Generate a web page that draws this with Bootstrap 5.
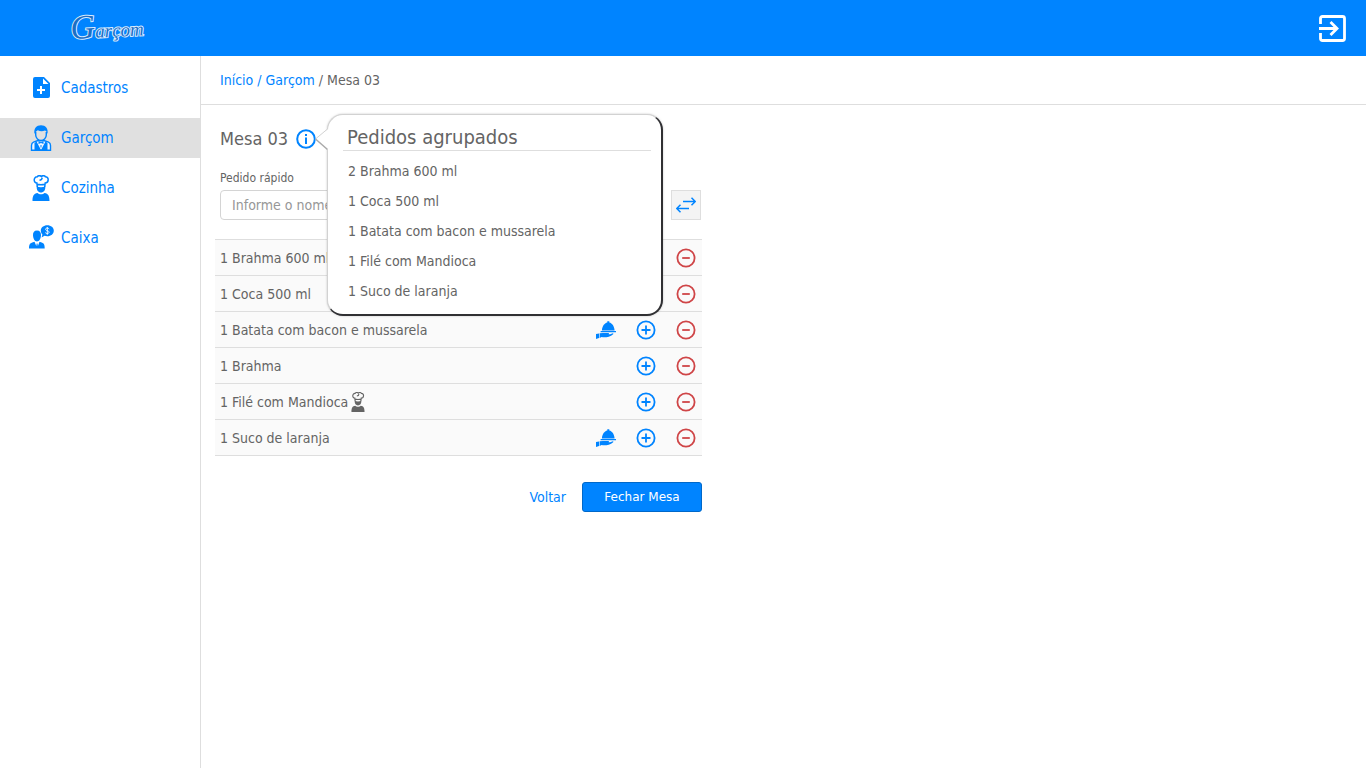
<!DOCTYPE html>
<html lang="pt-BR">
<head>
<meta charset="utf-8">
<meta name="viewport" content="width=device-width, initial-scale=1">
<title>Garçom - Mesa 03</title>
<link href="https://cdn.jsdelivr.net/npm/bootstrap@5.3.0/dist/css/bootstrap.min.css" rel="stylesheet">
<style>
  :root { --brand: #0084ff; --ink: #646464; --rule: #dedede; --danger: #cf4547; }
  body { font-family: Tahoma, "DejaVu Sans Condensed", "DejaVu Sans", sans-serif; font-size: 14px; line-height: 20px; color: var(--ink); background: #fff; }
  a { color: var(--brand); text-decoration: none; }
  svg { display: block; flex: none; }
  .topbar { height: 56px; background: var(--brand); padding: 0 20px 0 66px; }
  .brand-name { font-family: "Liberation Serif", serif; font-style: italic; font-weight: 400; fill: #1c6fc4; stroke: #d8ebff; stroke-width: 2; paint-order: stroke; }
  .sidebar { width: 201px; border-right: 1px solid var(--rule); padding-top: 12px; gap: 10px; }
  .sidebar .nav-link { height: 40px; padding: 0 0 0 28px; gap: 7px; font-size: 15px; color: var(--brand); border-radius: 0; }
  .sidebar .nav-link.active { background: #e0e0e0; }
  .sidebar .nav-link svg { width: 26px; height: 26px; }
  .crumbs { height: 49px; padding: 0 19px; border-bottom: 1px solid var(--rule); }
  .order { max-width: 487px; margin-left: 14px; padding-top: 22px; }
  .inset { padding-left: 5px; }
  .order h1 { font-size: 18px; line-height: 24px; }
  .bare { background: none; border: 0; padding: 0; color: var(--brand); }
  .minus { color: var(--danger); }
  .quick { padding: 15px 1px 19px 0; }
  .quick label { font-size: 12px; line-height: 16px; }
  .quick .form-control { height: 30px; font-size: 14px; padding: 0 11px; border-color: #d4d4d4; border-radius: 4px; }
  .quick .form-control::placeholder { color: #979797; }
  .swap { width: 30px; height: 30px; background: #f4f4f4; border: 1px solid var(--rule); padding: 0; color: var(--brand); }
  .items { border-top: 1px solid var(--rule); --bs-table-bg: #fafafa; --bs-table-color: var(--ink); border-color: var(--rule); color: var(--ink); }
  .items td { height: 36px; padding: 0 6px 0 5px; vertical-align: middle; color: var(--ink); }
  .actions { gap: 20px; }
  .grouped { left: 108px; top: -13px; width: 336px; height: 202px; z-index: 5; background: #fff; border: 1px solid #d2d2d2; border-right: 2px solid #303033; border-bottom: 2px solid #303033; border-radius: 16px; padding: 10px 10px 0 15px; box-shadow: 0 0 2px #8888; }
  .grouped h2 { font-size: 20px; line-height: 25px; padding-left: 4px; border-bottom: 1px solid var(--rule); }
  .grouped ul { padding-top: 5px; }
  .grouped li { line-height: 30px; padding-left: 5px; }
  .tail { left: -14px; top: 12px; }
  .foot { gap: 16px; padding-top: 26px; }
  .foot .btn { width: 120px; height: 30px; padding: 0; font-family: Verdana, "DejaVu Sans", sans-serif; font-size: 12px; color: #fff; background: var(--brand); border: 1px solid #0068c9; border-radius: 3px; }
</style>
</head>
<body class="d-flex flex-column min-vh-100">

<svg class="d-none" aria-hidden="true">
  <symbol id="plus" viewBox="0 0 20 20"><circle cx="10" cy="10" r="8.6" fill="none" stroke="currentColor" stroke-width="1.8"/><path d="M10 5.5v9M5.5 10h9" stroke="currentColor" stroke-width="1.8"/></symbol>
  <symbol id="minus" viewBox="0 0 20 20"><circle cx="10" cy="10" r="8.6" fill="none" stroke="currentColor" stroke-width="1.8"/><path d="M6.2 10h7.6" stroke="currentColor" stroke-width="1.8"/></symbol>
  <symbol id="serve" viewBox="0 0 20 20"><path fill="currentColor" d="M11.300 1.200h2v1.400c3 .6 4.900 3.700 5.300 7.800H5.900c.4-4.100 2.400-7.200 5.400-7.800zM4.600 11H20v1.300H4.600zM3.600 13.200 7 12.900h5.500q1 .5.200 1.300h1.500l2.600-1q1 .2.400 1-2 1.800-4.400 2.500-4 1-7.200.3l-2 .9zM0 14l3-.5v4.600l-3 .9z"/></symbol>
  <symbol id="chef" viewBox="0 0 26 26"><path d="M9.300 12 8.900 8C5.200 8 5.300 1.500 9.300 1.800 9.700.500 12.300.200 13.400 1.500 14.500.200 17 .500 17.400 1.800c4 0 3.500 6.200-.2 6.200l-.5 4M9 9.200q4 1 8 0M11.500 5.200q2.500-.2 2.700-2.500" fill="none" stroke="currentColor" stroke-width="1.500"/><path fill="currentColor" d="M8.700 11.500q4.300 1.500 8.600 0c.3 3.800-1.600 6-4.300 6s-4.600-2.200-4.300-6zM4.500 25.900c0-5 1.200-7.500 5-8 1.500 1.700 5.500 1.700 7 0 3.800.5 5 3 5 8z"/></symbol>
</svg>

<header class="topbar d-flex align-items-center justify-content-between">
  <a href="#" aria-label="Garçom">
    <svg width="84" height="50" viewBox="0 0 84 50"><text class="brand-name" transform="rotate(-3 5 36)" x="5" y="36"><tspan font-size="34">G</tspan><tspan font-size="19">arçom</tspan></text></svg>
  </a>
  <button class="bare text-white" type="button" aria-label="Sair">
    <svg width="27" height="27" viewBox="0 0 27 27" fill="none" stroke="currentColor" stroke-width="2.800"><path d="M1.500 9V3.500q0-2 2-2h20q2 0 2 2v20q0 2-2 2h-20q-2 0-2-2V18"/><path d="M0 13.500h17M11.500 7l6.500 6.500-6.500 6.500"/></svg>
  </button>
</header>

<div class="d-flex flex-grow-1">
  <nav class="sidebar nav flex-column flex-nowrap flex-shrink-0" aria-label="Principal">
    <a class="nav-link d-flex align-items-center" href="#">
      <svg viewBox="0 0 26 26"><path fill="currentColor" fill-rule="evenodd" d="M7 2h9l6 6v13q0 2-2 2H7q-2 0-2-2V4q0-2 2-2zM15 3.500V9h5.500z"/><path d="M13 11v8M9 15h8" stroke="#fff" stroke-width="2"/></svg>
      Cadastros</a>
    <a class="nav-link active d-flex align-items-center" href="#" aria-current="page">
      <svg viewBox="0 0 26 26" fill="none" stroke="currentColor" stroke-width="1.400"><path d="M7.700 7v3c0 3.200 2.800 5.500 5.300 5.500s5.300-2.300 5.300-5.500V7"/><path fill="currentColor" stroke="none" d="M6.500 9C5.500 3 8.500.200 13 .200S20.500 3 19.500 9c-.7-2-1.200-3-2.500-3.500-2.500 1.200-5 1-7.200-.2C8.400 6.200 7.200 7 6.500 9z"/><path fill="#f0f6ff" d="M10 15.500 5.500 17.200Q3.500 18 3.500 20.500v4.800h19v-4.800q0-2.500-2-3.300L16 15.500l-3 1.300z"/><path fill="currentColor" stroke="none" d="M8.500 16.500 13 25l4.500-8.500L19.500 18v8h-13v-8z"/><path fill="#f0f6ff" stroke="none" d="M10 16.500h6L13 24z"/><path fill="currentColor" stroke="none" d="m10.500 16 2.500 1.200 2.500-1.200v3L13 18l-2.500 1zM12.500 20h1v2.500h-1z"/></svg>
      Garçom</a>
    <a class="nav-link d-flex align-items-center" href="#">
      <svg viewBox="0 0 26 26"><use href="#chef"/></svg>
      Cozinha</a>
    <a class="nav-link d-flex align-items-center" href="#">
      <svg viewBox="0 0 26 26" fill="currentColor"><path d="M9 5.500c3 0 4.200 2 4 5s-1.800 6-4 6-3.800-3-4-6 1-5 4-5zM1 23.500c0-4.500 1-5.500 5.500-6.700L8.300 21l.4-2.500h.8l.4 2.500 1.600-4.200c4.500 1.200 5.200 2.200 5.200 6.700z"/><path d="M19.300.300c3.700 0 6.500 2.400 6.500 5.400s-2.800 5.500-6.500 5.500c-1 0-2-.1-2.800-.4l-2.900 1.600.8-2.900c-1-.9-1.600-2.300-1.600-3.800 0-3 2.800-5.400 6.500-5.400z"/><path d="M21.200 4q-.7-.9-1.900-.9c-2.400 0-2.200 2.200 0 2.600 2.500.5 2.400 2.800 0 2.800q-1.300 0-2-.9M19.300 2v7.800" fill="none" stroke="#fff" stroke-width=".9"/></svg>
      Caixa</a>
  </nav>

  <main class="flex-grow-1">
    <nav class="crumbs d-flex align-items-center" aria-label="Trilha">
      <span><a href="#">Início /</a> <a href="#">Garçom</a> / Mesa 03</span>
    </nav>

    <section class="order">
      <div class="inset position-relative d-flex align-items-center">
        <h1 class="fw-normal mb-0">Mesa 03</h1>
        <button class="bare ms-2" type="button" aria-label="Pedidos agrupados">
          <svg width="20" height="20" viewBox="0 0 20 20"><circle cx="10" cy="10" r="8.800" fill="none" stroke="currentColor" stroke-width="2"/><path d="M10 5v2M10 8.500V15" stroke="currentColor" stroke-width="2"/></svg>
        </button>
        <div class="grouped position-absolute ms-1" role="tooltip">
          <svg class="tail position-absolute" width="15" height="26" viewBox="0 0 15 26"><path d="M14.500 1 13 3 1.500 12 13 22l1.500 2z" fill="#fff"/><path d="M13.500 2 1.500 12" fill="none" stroke="#d2d2d2"/><path d="m1.500 12 12 10.500" fill="none" stroke="#aaa" stroke-width="1.500"/></svg>
          <h2 class="fw-normal mb-0">Pedidos agrupados</h2>
          <ul class="list-unstyled mb-0">
            <li>2 Brahma 600 ml</li>
            <li>1 Coca 500 ml</li>
            <li>1 Batata com bacon e mussarela</li>
            <li>1 Filé com Mandioca</li>
            <li>1 Suco de laranja</li>
          </ul>
        </div>
      </div>

      <form class="quick d-flex align-items-end gap-2">
        <div class="inset flex-grow-1 pt-1">
          <label for="pedido" class="d-block mb-1">Pedido rápido</label>
          <input id="pedido" class="form-control" type="text" placeholder="Informe o nome">
        </div>
        <button class="swap d-flex align-items-center justify-content-center" type="button" aria-label="Trocar mesa">
          <svg width="20" height="16" viewBox="0 0 20 16" fill="none" stroke="currentColor" stroke-width="1.500"><path d="M7 4.500h12.500M15.500.700l3.800 3.800-3.800 3.800M13 11.500H.500M4.500 7.700.700 11.500l3.800 3.800"/></svg>
        </button>
      </form>

      <table class="items table mb-0">
        <tbody>
          <tr><td>1 Brahma 600 ml</td><td><div class="actions d-flex justify-content-end"><button class="bare minus" type="button" aria-label="Remover"><svg width="20" height="20"><use href="#minus"/></svg></button></div></td></tr>
          <tr><td>1 Coca 500 ml</td><td><div class="actions d-flex justify-content-end"><button class="bare minus" type="button" aria-label="Remover"><svg width="20" height="20"><use href="#minus"/></svg></button></div></td></tr>
          <tr><td>1 Batata com bacon e mussarela</td><td><div class="actions d-flex justify-content-end"><button class="bare" type="button" aria-label="Entregar"><svg width="20" height="20"><use href="#serve"/></svg></button><button class="bare" type="button" aria-label="Adicionar"><svg width="20" height="20"><use href="#plus"/></svg></button><button class="bare minus" type="button" aria-label="Remover"><svg width="20" height="20"><use href="#minus"/></svg></button></div></td></tr>
          <tr><td>1 Brahma</td><td><div class="actions d-flex justify-content-end"><button class="bare" type="button" aria-label="Adicionar"><svg width="20" height="20"><use href="#plus"/></svg></button><button class="bare minus" type="button" aria-label="Remover"><svg width="20" height="20"><use href="#minus"/></svg></button></div></td></tr>
          <tr><td><span class="d-flex align-items-center">1 Filé com Mandioca <svg width="20" height="20"><use href="#chef"/></svg></span></td><td><div class="actions d-flex justify-content-end"><button class="bare" type="button" aria-label="Adicionar"><svg width="20" height="20"><use href="#plus"/></svg></button><button class="bare minus" type="button" aria-label="Remover"><svg width="20" height="20"><use href="#minus"/></svg></button></div></td></tr>
          <tr><td>1 Suco de laranja</td><td><div class="actions d-flex justify-content-end"><button class="bare" type="button" aria-label="Entregar"><svg width="20" height="20"><use href="#serve"/></svg></button><button class="bare" type="button" aria-label="Adicionar"><svg width="20" height="20"><use href="#plus"/></svg></button><button class="bare minus" type="button" aria-label="Remover"><svg width="20" height="20"><use href="#minus"/></svg></button></div></td></tr>
        </tbody>
      </table>

      <div class="foot d-flex justify-content-end align-items-center">
        <a href="#">Voltar</a>
        <button class="btn" type="button">Fechar Mesa</button>
      </div>
    </section>
  </main>
</div>
<script src="https://cdn.jsdelivr.net/npm/bootstrap@5.3.0/dist/js/bootstrap.bundle.min.js"></script>
</body>
</html>
